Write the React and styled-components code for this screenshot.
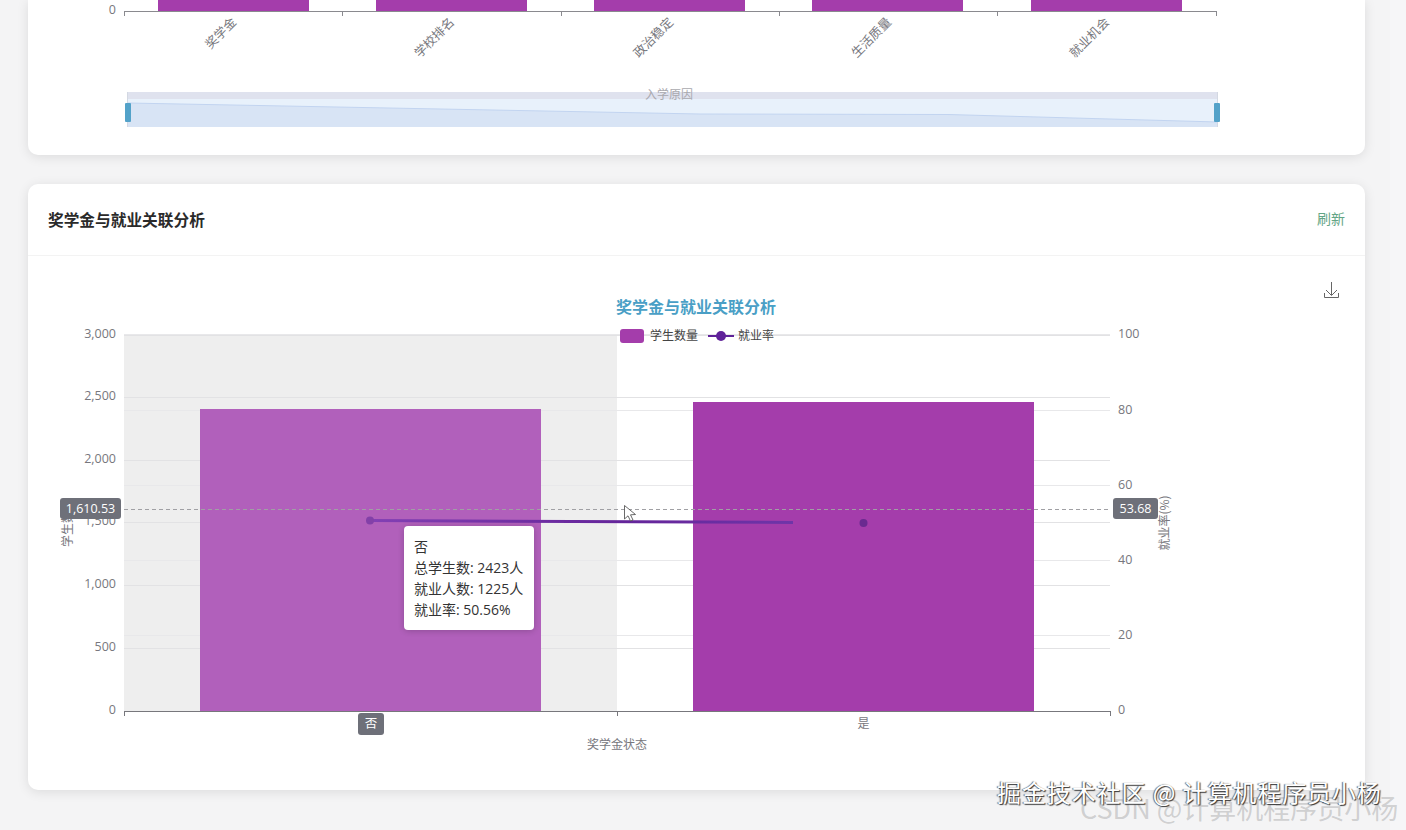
import styled, { createGlobalStyle } from "styled-components";

const GlobalStyle = createGlobalStyle`
  html, body {
    margin: 0;
    height: 100%;
    overflow: hidden;
    background: #f4f4f5;
  }
  body {
    font-family: "Open Sans", "Noto Sans CJK SC", sans-serif;
  }
`;

const Page = styled.div`
  position: relative;
  display: grid;
  grid-template-columns: 1fr 16px;
  width: 1406px;
  height: 830px;
  overflow: hidden;
`;
const Main = styled.main`
  padding: 0 25px 0 28px;
`;
const ScrollTrack = styled.div`
  background: #f6f6f8;
`;
const Card = styled.section`
  background: #fff;
  border-radius: 10px;
  box-shadow: 0 2px 12px rgba(0, 0, 0, 0.1);
`;
const TopCard = styled(Card)`
  height: 155px;
  border-radius: 0 0 10px 10px;
`;
const AnalysisCard = styled(Card)`
  height: 606px;
  margin-top: 29px;
  display: flex;
  flex-direction: column;
`;
const CardHeader = styled.header`
  display: flex;
  align-items: center;
  justify-content: space-between;
  height: 72px;
  padding: 0 20px;
  border-bottom: 1px solid #f3f3f3;
  box-sizing: border-box;
`;
const CardTitle = styled.h3`
  margin: 0;
  font-size: 15.7px;
  font-weight: 700;
  color: #2a2a2a;
  font-family: "Noto Sans CJK SC", sans-serif;
`;
const RefreshLink = styled.a`
  margin-top: -3px;
  font-size: 14px;
  color: #62a585;
  font-family: "Noto Sans CJK SC", sans-serif;
`;
const ChartBody = styled.div`
  position: relative;
  flex: 1;
`;
const ChartSvg = styled.svg`
  display: block;
  font-family: "Open Sans", "Noto Sans CJK SC", sans-serif;
`;
const TickLabel = styled.text`
  font-size: 12.5px;
  fill: #77777d;
`;
const CategoryLabel = styled.text`
  font-size: ${(props) => props.$size || 12}px;
  fill: #77777d;
  font-family: "Noto Sans CJK SC", sans-serif;
`;
const AxisName = styled.text`
  font-size: 12px;
  fill: #77777d;
  text-anchor: middle;
  font-family: "Noto Sans CJK SC", sans-serif;
`;
const ZoomName = styled.text`
  font-size: 12px;
  fill: #a9a9ae;
  text-anchor: middle;
  font-family: "Noto Sans CJK SC", sans-serif;
`;
const ChartTitle = styled.text`
  font-size: 16px;
  font-weight: 700;
  fill: #4a9fc6;
  text-anchor: middle;
  font-family: "Noto Sans CJK SC", sans-serif;
`;
const LegendText = styled.text`
  font-size: 12px;
  fill: #444;
  font-family: "Noto Sans CJK SC", sans-serif;
`;
const BadgeText = styled.text`
  font-size: 12.5px;
  fill: #fff;
  text-anchor: middle;
`;
const Tooltip = styled.div`
  position: absolute;
  left: 376px;
  top: 270px;
  width: 130px;
  height: 104px;
  box-sizing: border-box;
  padding: 10px;
  background: #fff;
  border-radius: 4px;
  box-shadow: 0 1px 6px rgba(0, 0, 0, 0.2);
  font-size: 14px;
  line-height: 21px;
  color: #333;
  white-space: nowrap;
`;
const Watermark = styled.div`
  position: absolute;
  left: ${(props) => props.$left}px;
  top: ${(props) => props.$top}px;
  white-space: nowrap;
  font-family: "Noto Sans CJK SC", sans-serif;
`;
const JuejinMark = styled(Watermark)`
  font-size: 24px;
  line-height: 30px;
  letter-spacing: 0.9px;
  color: #fff;
  text-shadow: 1px 1px 1px #333, -1px 0 1px #666;
`;
const CsdnMark = styled(Watermark)`
  font-size: 27px;
  line-height: 30px;
  color: rgba(150, 150, 150, 0.4);
`;

const TOP_BARS = [158, 376, 594, 812, 1031];
const TOP_TICKS = [124, 342, 561, 779, 997, 1216];
const TOP_LABELS = [
  { text: "奖学金", x: 237 },
  { text: "学校排名", x: 455 },
  { text: "政治稳定", x: 674 },
  { text: "生活质量", x: 892 },
  { text: "就业机会", x: 1110 },
];
const LEFT_TICKS = [
  { label: "3,000", y: 335 },
  { label: "2,500", y: 397 },
  { label: "2,000", y: 460 },
  { label: "1,500", y: 522 },
  { label: "1,000", y: 585 },
  { label: "500", y: 648 },
  { label: "0", y: 711 },
];
const RIGHT_TICKS = [
  { label: "100", y: 334 },
  { label: "80", y: 410 },
  { label: "60", y: 485 },
  { label: "40", y: 560 },
  { label: "20", y: 635 },
  { label: "0", y: 710 },
];

function TopChart() {
  return (
    <ChartSvg width="1337" height="155" viewBox="28 0 1337 155">
      {TOP_BARS.map((x) => (
        <rect key={x} x={x} y="0" width="151" height="11" fill="#a43dab" />
      ))}
      <path d="M124 11.5H1216" stroke="#8a8a8f" />
      {TOP_TICKS.map((x) => (
        <path key={x} d={`M${x + 0.5} 11V16`} stroke="#8a8a8f" />
      ))}
      <TickLabel x="116" y="14" textAnchor="end">0</TickLabel>
      {TOP_LABELS.map((item) => (
        <CategoryLabel key={item.text} $size={12.5} x={item.x} y="23" textAnchor="end" transform={`rotate(-45 ${item.x} 23)`}>
          {item.text}
        </CategoryLabel>
      ))}
      <rect x="128" y="92" width="1090" height="35" fill="#e8f1fb" />
      <rect x="128" y="92" width="1090" height="7" fill="#dfe2ee" />
      <path d="M128 103L700 114L948 114.5L1218 122V127H128Z" fill="#d8e4f5" />
      <path d="M128 103L700 114L948 114.5L1218 122" fill="none" stroke="#c2d4f0" />
      <path d="M127.5 92V127M1217.5 92V127" stroke="#d3d8e2" />
      <rect x="125" y="103" width="6" height="19" rx="1" fill="#53a2c9" />
      <rect x="1214" y="103" width="6" height="19" rx="1" fill="#53a2c9" />
      <ZoomName x="669" y="99">入学原因</ZoomName>
    </ChartSvg>
  );
}

function AnalysisChart() {
  return (
    <ChartSvg width="1337" height="534" viewBox="28 256 1337 534">
      <defs>
        <linearGradient id="rateLine" gradientUnits="userSpaceOnUse" x1="370" y1="0" x2="793" y2="0">
          <stop offset="0" stopColor="#8340b4" />
          <stop offset="0.6" stopColor="#64259a" />
          <stop offset="1" stopColor="#6f35a8" />
        </linearGradient>
      </defs>
      <ChartTitle x="696" y="313">奖学金与就业关联分析</ChartTitle>
      <path d="M1331.5 282V295M1326 290L1331.5 295.5L1337 290M1324.5 293V297.5H1338.5V293" fill="none" stroke="#666" strokeWidth="1" />

      <rect x="124" y="335" width="493" height="376" fill="#eeeeee" />
      {LEFT_TICKS.slice(0, 6).map((tick) => (
        <path key={tick.y} d={`M124 ${tick.y + 0.5}H1110`} stroke="#e2e2e4" />
      ))}
      {RIGHT_TICKS.slice(0, 5).map((tick) => (
        <path key={tick.y} d={`M124 ${tick.y + 0.5}H1110`} stroke="#e8e8ea" />
      ))}

      <rect x="200" y="409" width="341" height="302" fill="#b160bb" />
      <rect x="693" y="402" width="341" height="309" fill="#a43dab" />

      <path d="M124 711.5H1110" stroke="#77777c" />
      {[124, 617, 1110].map((x) => (
        <path key={x} d={`M${x + 0.5} 711V716`} stroke="#77777c" />
      ))}

      <path d="M124 509.5H1110" stroke="#a0a0a4" strokeDasharray="4 3" />
      <path d="M370 520.5L793 522.5" stroke="url(#rateLine)" strokeWidth="3" fill="none" />
      <circle cx="370" cy="520.5" r="4" fill="#8340a8" />
      <circle cx="863.5" cy="523" r="4" fill="#6a2a90" />

      {LEFT_TICKS.map((tick) => (
        <TickLabel key={tick.label} x="116" y={tick.y + 3} textAnchor="end">{tick.label}</TickLabel>
      ))}
      {RIGHT_TICKS.map((tick) => (
        <TickLabel key={tick.label} x="1118" y={tick.y + 4}>{tick.label}</TickLabel>
      ))}
      <CategoryLabel x="863.5" y="728" textAnchor="middle">是</CategoryLabel>
      <AxisName x="617" y="749">奖学金状态</AxisName>
      <AxisName x="0" y="0" transform="translate(72 529) rotate(-90)">学生数</AxisName>
      <AxisName x="0" y="0" transform="translate(1169 523) rotate(-90)">就业率(%)</AxisName>

      <rect x="60" y="498" width="61" height="21" rx="3" fill="#6e7079" />
      <BadgeText x="90.5" y="513">1,610.53</BadgeText>
      <rect x="1113" y="498" width="45" height="21" rx="3" fill="#6e7079" />
      <BadgeText x="1135.5" y="513">53.68</BadgeText>
      <rect x="358" y="713" width="26" height="22" rx="3" fill="#6e7079" />
      <BadgeText x="371" y="728">否</BadgeText>

      <rect x="620" y="329" width="24" height="14" rx="3" fill="#a43dab" />
      <LegendText x="650" y="340">学生数量</LegendText>
      <path d="M708 336H734" stroke="#5f2299" strokeWidth="2" />
      <circle cx="721" cy="336" r="5" fill="#5f2299" />
      <LegendText x="738" y="340">就业率</LegendText>

      <path d="M624.5 505.5V519L628 515.8L630.5 521L633 520L630.5 514.8L635.5 514.5Z" fill="#fff" stroke="#444" strokeWidth="0.8" />
    </ChartSvg>
  );
}

export default function App() {
  return (
    <Page>
      <GlobalStyle />
      <Main>
        <TopCard>
          <TopChart />
        </TopCard>
        <AnalysisCard>
          <CardHeader>
            <CardTitle>奖学金与就业关联分析</CardTitle>
            <RefreshLink>刷新</RefreshLink>
          </CardHeader>
          <ChartBody>
            <AnalysisChart />
            <Tooltip>
              否<br />
              总学生数: 2423人<br />
              就业人数: 1225人<br />
              就业率: 50.56%
            </Tooltip>
          </ChartBody>
        </AnalysisCard>
      </Main>
      <ScrollTrack />
      <CsdnMark $left={1080} $top={793}>CSDN @计算机程序员小杨</CsdnMark>
      <JuejinMark $left={997} $top={777}>掘金技术社区 @ 计算机程序员小杨</JuejinMark>
    </Page>
  );
}
